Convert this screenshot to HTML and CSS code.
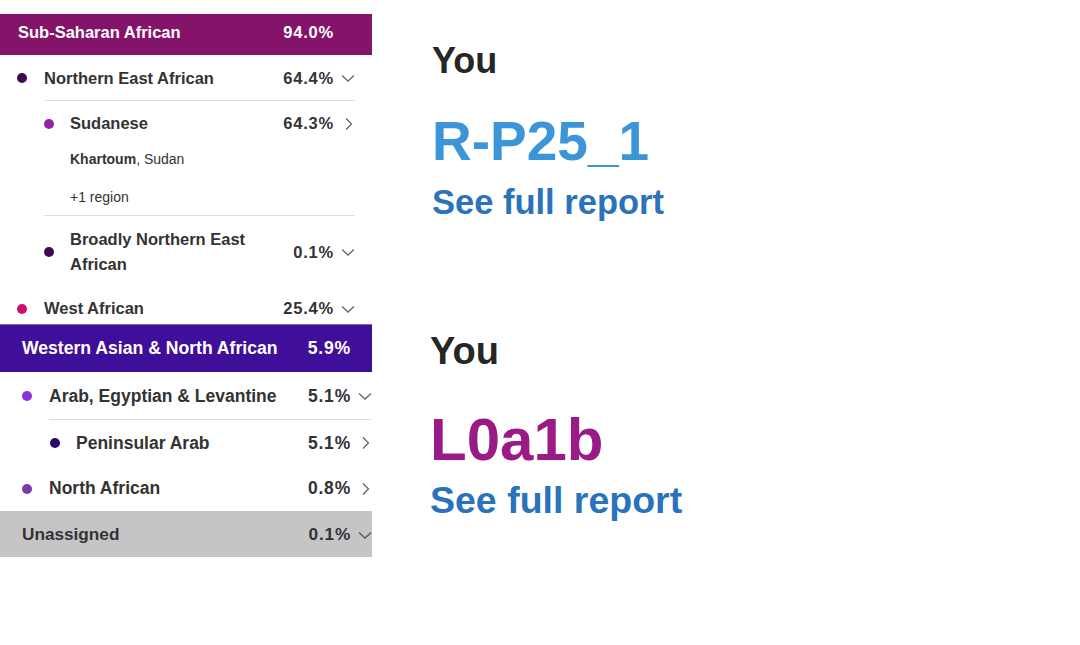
FILE: index.html
```html
<!DOCTYPE html>
<html lang="en">
<head>
<meta charset="utf-8">
<title>Ancestry composition</title>
<link rel="stylesheet" href="styles.css">
</head>
<body>
<div class="page">
  <div class="panel">
    <div class="sec sec-a">
      <div class="topspace"></div>
      <div class="bar bar-ssa">
        <span class="name">Sub-Saharan African</span>
        <span class="pct">94.0%</span>
      </div>
      <div class="row">
        <span class="dot c-nea"></span>
        <span class="name">Northern East African</span>
        <span class="pct">64.4%</span>
        <span class="chev"><svg width="14" height="14" viewBox="0 0 14 14"><path d="M1 4.5 L7 10 L13 4.5" fill="none" stroke="#666" stroke-width="1.3"/></svg></span>
      </div>
      <div class="sub">
        <div class="item bordered">
          <div class="row">
            <span class="dot c-sud"></span>
            <span class="name">Sudanese</span>
            <span class="pct">64.3%</span>
            <span class="chev"><svg width="14" height="14" viewBox="0 0 14 14"><path d="M5 1.5 L10.5 7 L5 12.5" fill="none" stroke="#666" stroke-width="1.3"/></svg></span>
          </div>
          <div class="details">
            <div class="dline"><b>Khartoum</b>, Sudan</div>
            <div class="dline more">+1 region</div>
          </div>
        </div>
        <div class="row tall">
          <span class="dot c-nea"></span>
          <span class="name">Broadly Northern East<br>African</span>
          <span class="pct">0.1%</span>
          <span class="chev"><svg width="14" height="14" viewBox="0 0 14 14"><path d="M1 4.5 L7 10 L13 4.5" fill="none" stroke="#666" stroke-width="1.3"/></svg></span>
        </div>
      </div>
      <div class="row short">
        <span class="dot c-west"></span>
        <span class="name">West African</span>
        <span class="pct">25.4%</span>
        <span class="chev"><svg width="14" height="14" viewBox="0 0 14 14"><path d="M1 4.5 L7 10 L13 4.5" fill="none" stroke="#666" stroke-width="1.3"/></svg></span>
      </div>
    </div>

    <div class="sec sec-b">
      <div class="bar bar-wana">
        <span class="name">Western Asian &amp; North African</span>
        <span class="pct">5.9%</span>
      </div>
      <div class="row r47">
        <span class="dot c-arab"></span>
        <span class="name">Arab, Egyptian &amp; Levantine</span>
        <span class="pct">5.1%</span>
        <span class="chev"><svg width="14" height="14" viewBox="0 0 14 14"><path d="M1 4.5 L7 10 L13 4.5" fill="none" stroke="#666" stroke-width="1.3"/></svg></span>
      </div>
      <div class="sub">
        <div class="row r46 bordered-top">
          <span class="dot c-pen"></span>
          <span class="name">Peninsular Arab</span>
          <span class="pct">5.1%</span>
          <span class="chev"><svg width="14" height="14" viewBox="0 0 14 14"><path d="M5 1.5 L10.5 7 L5 12.5" fill="none" stroke="#666" stroke-width="1.3"/></svg></span>
        </div>
      </div>
      <div class="row r46">
        <span class="dot c-na"></span>
        <span class="name">North African</span>
        <span class="pct">0.8%</span>
        <span class="chev"><svg width="14" height="14" viewBox="0 0 14 14"><path d="M5 1.5 L10.5 7 L5 12.5" fill="none" stroke="#666" stroke-width="1.3"/></svg></span>
      </div>
      <div class="bar bar-un">
        <span class="name">Unassigned</span>
        <span class="pct">0.1%</span>
        <span class="chev"><svg width="14" height="14" viewBox="0 0 14 14"><path d="M1 4.5 L7 10 L13 4.5" fill="none" stroke="#555" stroke-width="1.3"/></svg></span>
      </div>
    </div>
  </div>

  <div class="right">
    <div class="you you-1">You</div>
    <div class="hap hap-y">R-P25_1</div>
    <div class="report report-1">See full report</div>
    <div class="you you-2">You</div>
    <div class="hap hap-m">L0a1b</div>
    <div class="report report-2">See full report</div>
  </div>
</div>
</body>
</html>
```

FILE: styles.css
```css
* { box-sizing: border-box; }
html, body { margin: 0; padding: 0; background: #fff; }
body {
  font-family: "Liberation Sans", Arial, sans-serif;
  color: #333;
  width: 1080px;
  height: 645px;
  overflow: hidden;
}
.page { display: flex; align-items: flex-start; }
.panel { width: 372px; flex: none; overflow: hidden; }

.topspace { height: 14px; }

.bar {
  display: flex;
  align-items: center;
  font-weight: bold;
  font-size: 16.5px;
  color: #fff;
}
.bar .name { flex: 1; }
.pct { letter-spacing: 0.8px; }
.bar-ssa {
  height: 41px;
  padding: 0 38px 4px 18px;
  background: #84146a;
}
.bar-wana {
  height: 48px;
  padding: 1px 21px 0 22px;
  font-size: 17.6px;
  background: #400f9a;
  box-shadow: inset 0 1px 0 #8a64c4;
}
.bar-un {
  height: 46px;
  padding: 1px 0 0 22px;
  font-size: 17.2px;
  background: #c5c5c7;
  color: #333;
}
.bar-un .chev { margin-left: 7px; }

.row {
  display: flex;
  align-items: center;
  font-size: 16.5px;
  font-weight: bold;
  color: #333;
}
.row .name { flex: 1; }
.dot {
  width: 10px;
  height: 10px;
  border-radius: 50%;
  flex: none;
}
.chev {
  width: 14px;
  height: 14px;
  flex: none;
  display: flex;
}

/* Section A */
.sec-a .row { height: 45px; padding: 1px 17px 0 17px; }
.sec-a .dot { margin-right: 17px; }
.sec-a .chev { margin-left: 7px; }
.sec-a .sub { margin: 0 17px 0 44px; }
.sec-a .sub .row { padding: 1px 0 0 0; }
.sec-a .sub .dot { margin-right: 16px; }
.sec-a .sub .item.bordered {
  border-top: 1px solid #dedede;
  border-bottom: 1px solid #dedede;
}
.sec-a .sub .item .row { height: 44px; }
.details {
  padding: 0 0 4px 26px;
  font-size: 14px;
  color: #333;
  font-weight: normal;
}
.dline { height: 28px; line-height: 28px; }
.dline.more { margin-top: 10px; }
.sec-a .sub .row.tall {
  height: auto;
  padding: 11px 0 15px 0;
  line-height: 25px;
}
.sec-a .row.short { height: 32px; }

/* Section B */
.sec-b .row { padding: 1px 0 0 22px; font-size: 17.5px; }
.sec-b .dot { margin-right: 17px; }
.sec-b .chev { margin-left: 7px; }
.sec-b .r47 { height: 47px; }
.sec-b .r46 { height: 46px; }
.sec-b .sub { margin-left: 49px; }
.sec-b .sub .row { padding-left: 1px; }
.sec-b .sub .dot { margin-right: 16px; }
.bordered-top { border-top: 1px solid #dedede; }

/* dot colours */
.c-nea { background: #3f0a4f; }
.c-sud { background: #9a1fa6; }
.c-west { background: #cc0d6d; }
.c-arab { background: #8c30dc; }
.c-pen { background: #28096b; }
.c-na { background: #7a3aa9; }

/* Right column */
.right {
  margin-left: 60px;
  padding-top: 43px;
  display: flex;
  flex-direction: column;
  align-items: flex-start;
  font-weight: bold;
  line-height: 1;
}
.you { color: #262626; }
.you-1 { font-size: 36px; }
.hap-y { font-size: 55px; color: #3b95d8; margin-top: 35px; }
.report { color: #2a73bb; }
.report-1 { font-size: 34.5px; margin-top: 16px; }
.you-2 { font-size: 38px; margin-top: 112px; margin-left: -2px; }
.hap-m { font-size: 60px; color: #9a1a86; margin-top: 40px; margin-left: -2px; }
.report-2 { font-size: 37.5px; margin-top: 12px; margin-left: -2px; }
```
